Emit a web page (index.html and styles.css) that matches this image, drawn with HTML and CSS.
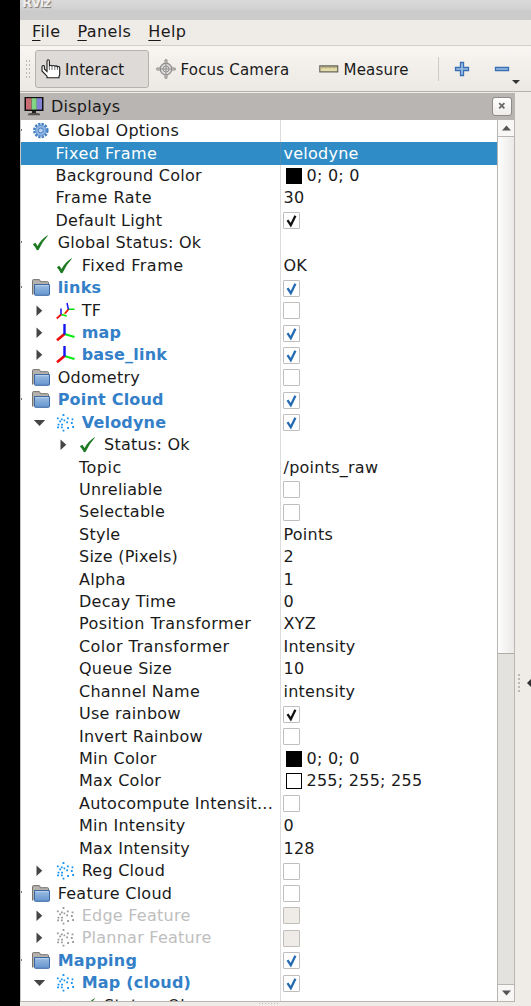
FILE: index.html
```html
<!DOCTYPE html>
<html lang="en">
<head>
<meta charset="utf-8">
<title>RViz</title>
<link rel="stylesheet" href="styles.css">
<script src="tree.js" defer></script>
</head>
<body>
<svg width="0" height="0" class="defs">
  <defs>
    <linearGradient id="gFolder" x1="0" y1="0" x2="0" y2="1"><stop offset="0" stop-color="#9dbde3"/><stop offset="1" stop-color="#6595ce"/></linearGradient>
    <symbol id="folder" viewBox="0 0 20 20">
      <path d="M1.500 16.500V2.500q0-.9 1-.9h5.500q.8 0 1 .9l.4 1.200h7.200q.9 0 .9.9V12" fill="#b5b1ad" stroke="#77736f"/>
      <path d="M3.500 6.500h15v9.900q0 .9-.9.9H4.400q-.9 0-.9-.9z" fill="url(#gFolder)" stroke="#3b67a3"/>
      <path d="M4.600 7.600h12.800" stroke="#b9d0ec" fill="none"/>
    </symbol>
    <symbol id="gear" viewBox="0 0 20 20">
      <circle cx="9.800" cy="9.500" r="6.500" fill="none" stroke="#4780c2" stroke-width="2.600" stroke-dasharray="2.300 1.100"/>
      <circle cx="9.800" cy="9.500" r="5.300" fill="#8db4e2" stroke="#5a8fce"/>
      <circle cx="9.800" cy="9.500" r="2.500" fill="#b9d2f0" stroke="#4780c2"/>
    </symbol>
    <symbol id="check" viewBox="0 0 20 20">
      <path d="M1.800 11.300l2.500-1.500 2.300 3.200Q10 6.200 16.600 2.200l.4.400Q11.500 8.500 7.500 17l-1.600.200Q4.200 13.800 1.800 11.300z" fill="#1d7a22"/>
    </symbol>
    <symbol id="axes" viewBox="0 0 20 20">
      <path d="M9.500 11l10 3" stroke="#06ee10" stroke-width="2.200"/>
      <path d="M9.500 11l-7.500 6.300" stroke="#ee0a0a" stroke-width="2.600"/>
      <path d="M9.500 1V11.500" stroke="#1414f0" stroke-width="2.400"/>
    </symbol>
    <symbol id="tf" viewBox="0 0 20 20">
      <path d="M13.500 8.300L8.500 13.500" stroke="#f4d422" stroke-width="1.500"/>
      <path d="M13 8.300h6.500M6.200 13.500l5.500 1.500" stroke="#06e010" stroke-width="1.500"/>
      <path d="M13.500 8.300L10 12.500M6.200 13.500l-4.500 4" stroke="#ee1111" stroke-width="1.700"/>
      <path d="M12 2l1.400 6.300M6 7.500v6" stroke="#1414f0" stroke-width="1.500"/>
    </symbol>
    <symbol id="cloud" viewBox="0 0 20 20">
      <path fill="none" stroke="currentColor" stroke-width="1.800" d="M7.600 2h1.800M1.900 5.400h1.800M5.900 6.400h1.800M11.900 5.400h1.800M16.600 6.400h1.800M4.200 8.400h1.800M8.600 7.400h1.600M11.200 9.400H13M15.900 10h1.800M2.600 11.700h1.800M6.200 11.700H8M2.200 14.400H4M5.900 14.400h1.800M12.200 15H14M17.200 14h1.800M7.600 17.700h1.800"/>
    </symbol>
    <symbol id="right" viewBox="0 0 14 14"><path d="M4.500 1.500v10.500L10.300 6.800z" fill="#454545"/></symbol>
    <symbol id="down" viewBox="0 0 14 14"><path d="M1.800 4h11.400L7.500 10z" fill="#454545"/></symbol>
    <symbol id="tick" viewBox="0 0 17 17"><path d="M4.500 8.200l3.300 5 4.600-9.500" fill="none" stroke="currentColor" stroke-width="2.300"/></symbol>
  </defs>
</svg>

<div class="window">
  <div class="titlebar"><span>RViz</span></div>
  <nav class="menubar"><span><u>F</u>ile</span><span><u>P</u>anels</span><span><u>H</u>elp</span></nav>
  <div class="toolbar">
    <i class="grip"></i>
    <div class="tool active">
      <svg width="20" height="20" viewBox="0 0 20 20"><path d="M6 10.500V2.200Q6 .8 7.200.8t1.200 1.400V7.500q0-1.200 1.300-1.200T11 7.500q0-1 1.400-1t1.400 1.200q.1-.8 1.300-.8t1.300 1q.2-.4 1.300-.3t1 1.300V15.500q0 1-.7 1.700v1.500H6v-1.500L1 12V7.500q0-1 1.200-1t1.200 1V10L6 12.500z" fill="#fff" stroke="#1b1b1b" stroke-width="1.100"/><path d="M8.400 7.500V11M11 7.500V11M13.800 7.500V11M16.400 8V11" stroke="#555" stroke-width=".8"/></svg>
      <span>Interact</span>
    </div>
    <div class="tool focus">
      <svg width="20" height="20" viewBox="0 0 20 20" fill="none"><circle cx="10" cy="10" r="5.800" fill="#dedcda" stroke="#8d8b89" stroke-width="1.300"/><circle cx="10" cy="10" r="3" stroke="#939190"/><path d="M10 4.500v11M4.500 10h11" stroke="#939190"/><path d="M9 4V.8h2V4M9 16v3.200h2V16M4 9H.8v2H4M16 9h3.200v2H16" fill="#d5d3d1" stroke="#8d8b89"/></svg>
      <span>Focus Camera</span>
    </div>
    <div class="tool measure">
      <svg width="20" height="20" viewBox="0 0 20 20"><path d="M.8 6.800h17.900v6H.8z" fill="#e6dda6" stroke="#66665f" stroke-width="1.200"/><path d="M3 7v2.500M5 7v2M7 7v2.500M9 7v2M11 7v2.500M13 7v2M15 7v2.500M17 7v2" stroke="#777260" stroke-width=".8"/></svg>
      <span>Measure</span>
    </div>
    <i class="sep"></i>
    <svg class="plus" width="16" height="16" viewBox="0 0 16 16"><path d="M6.500 1.500h3v5h5v3h-5v5h-3v-5h-5v-3h5z" fill="#9cc0e8" stroke="#3a70b2" stroke-width="1.300"/></svg>
    <svg class="minus" width="16" height="16" viewBox="0 0 16 16"><path d="M1.500 6.500h13v3h-13z" fill="#9cc0e8" stroke="#3a70b2" stroke-width="1.300"/></svg>
    <svg class="more" width="8" height="4" viewBox="0 0 8 4"><path d="M0 0h8L4 4z" fill="#333"/></svg>
  </div>

  <div class="workspace">
    <section class="dock">
      <header class="dock-title">
        <svg width="20" height="20" viewBox="0 0 20 20"><rect x=".5" y="1" width="19" height="14" fill="#111"/><path d="M2 2.200h5.600v11.400H2z" fill="#c96d72"/><path d="M7.600 2.200h5.200v11.400H7.600z" fill="#83d585"/><path d="M12.800 2.200H18v11.400h-5.200z" fill="#8381d3"/><path d="M8 15h4v2.500H8z" fill="#222"/><path d="M4 18.500q0-1.500 3-1.500h6q3 0 3 1.500v.8H4z" fill="#55534f"/></svg>
        <span>Displays</span>
        <b class="close"><svg width="8" height="8" viewBox="0 0 8 8"><path d="M1.200 1.200l5.200 5.200M6.400 1.200L1.200 6.400" stroke="#666" stroke-width="1.700"/></svg></b>
      </header>
      <div class="view">
        <div class="tree" id="tree"></div>
        <div class="scroll">
          <div class="btn up"><svg width="9" height="6" viewBox="0 0 9 6"><path d="M0 5.500L4.500.5 9 5.500z" fill="#555"/></svg></div>
          <div class="thumb"></div>
          <div class="trough"></div>
          <div class="btn dn"><svg width="9" height="6" viewBox="0 0 9 6"><path d="M0 .5h9L4.500 5.500z" fill="#555"/></svg></div>
        </div>
      </div>
      <footer class="resize"><i></i></footer>
    </section>
    <aside class="splitter"><i></i><svg width="4" height="8" viewBox="0 0 4 8"><path d="M4 0v8L0 4z" fill="#333"/></svg></aside>
  </div>
</div>
</body>
</html>
```
FILE: tree.js
```javascript
// Each row: level, icon, expander arrow, name, value kind, value text, extra classes
const rows = [
  [0, "gear", "", "Global Options", "", "", "dot"],
  [1, "", "", "Fixed Frame", "text", "velodyne", "selected wide"],
  [1, "", "", "Background Color", "black", "0; 0; 0", ""],
  [1, "", "", "Frame Rate", "text", "30", "wide"],
  [1, "", "", "Default Light", "on", "", ""],
  [0, "check", "", "Global Status: Ok", "", "", "dot"],
  [1, "check", "", "Fixed Frame", "text", "OK", "wide"],
  [0, "folder", "", "links", "on", "", "dot enabled"],
  [1, "tf", "right", "TF", "off", "", ""],
  [1, "axes", "right", "map", "on", "", "enabled"],
  [1, "axes", "right", "base_link", "on", "", "enabled"],
  [0, "folder", "", "Odometry", "off", "", ""],
  [0, "folder", "", "Point Cloud", "on", "", "dot enabled"],
  [1, "cloud", "down", "Velodyne", "on", "", "enabled"],
  [2, "check", "right", "Status: Ok", "", "", ""],
  [2, "", "", "Topic", "text", "/points_raw", "wide"],
  [2, "", "", "Unreliable", "off", "", ""],
  [2, "", "", "Selectable", "off", "", ""],
  [2, "", "", "Style", "text", "Points", ""],
  [2, "", "", "Size (Pixels)", "text", "2", ""],
  [2, "", "", "Alpha", "text", "1", ""],
  [2, "", "", "Decay Time", "text", "0", ""],
  [2, "", "", "Position Transformer", "text", "XYZ", "semi"],
  [2, "", "", "Color Transformer", "text", "Intensity", "semi"],
  [2, "", "", "Queue Size", "text", "10", ""],
  [2, "", "", "Channel Name", "text", "intensity", ""],
  [2, "", "", "Use rainbow", "on", "", ""],
  [2, "", "", "Invert Rainbow", "off", "", ""],
  [2, "", "", "Min Color", "black", "0; 0; 0", ""],
  [2, "", "", "Max Color", "white", "255; 255; 255", ""],
  [2, "", "", "Autocompute Intensit...", "off", "", ""],
  [2, "", "", "Min Intensity", "text", "0", ""],
  [2, "", "", "Max Intensity", "text", "128", ""],
  [1, "cloud", "right", "Reg Cloud", "off", "", ""],
  [0, "folder", "", "Feature Cloud", "off", "", "dot"],
  [1, "cloud", "right", "Edge Feature", "off", "", "disabled"],
  [1, "cloud", "right", "Plannar Feature", "off", "", "disabled"],
  [0, "folder", "", "Mapping", "on", "", "dot enabled"],
  [1, "cloud", "down", "Map (cloud)", "on", "", "enabled"],
  [2, "check", "right", "Status: Ok", "", "", ""],
];

const use = (id, size, cls) =>
  `<svg class="${cls}" width="${size}" height="${size}"><use href="#${id}"/></svg>`;

function valueCell(kind, text) {
  if (kind === "on") return `<span class="box">${use("tick", 17, "tick")}</span>`;
  if (kind === "off") return `<span class="box"></span>`;
  if (kind === "black" || kind === "white") return `<i class="swatch ${kind}"></i><span>${text}</span>`;
  return `<span>${text}</span>`;
}

document.getElementById("tree").innerHTML = rows
  .map(([level, icon, arrow, name, kind, value, cls]) => {
    const lead = icon && level > 0
      ? (arrow ? use(arrow, 14, "arrow") : `<i class="arrow"></i>`)
      : "";
    const pic = icon ? use(icon, 20, "icon " + icon) : "";
    return `<div class="row ${cls}"><div class="name l${level} ${icon ? "" : "plain"}">${lead}${pic}<span>${name}</span></div><div class="value">${valueCell(kind, value)}</div></div>`;
  })
  .join("");
```
FILE: styles.css
```css
* { box-sizing: border-box; }
body {
  margin: 0;
  height: 1006px;
  overflow: hidden;
  background: #000;
  color: #1a1a1a;
  font: 16px "DejaVu Sans", sans-serif;
  letter-spacing: 0.25px;
}
.defs { position: absolute; }
svg { display: block; flex: none; }
.window {
  margin-left: 20px;
  height: 1006px;
  display: flex;
  flex-direction: column;
  background: #efebe7;
}
.titlebar {
  height: 20px;
  flex: none;
  overflow: hidden;
  background: linear-gradient(#dadada, #d2d2d2 45%, #cbcbcb 55%, #cccccc);
}
.titlebar span {
  display: block;
  margin: -6px 0 0 2px;
  font-size: 13px;
  line-height: 18px;
  font-weight: bold;
  letter-spacing: -1px;
  color: #eee;
  text-shadow: 1px 1px 1px #777;
}
.menubar {
  height: 26px;
  flex: none;
  display: flex;
  gap: 17px;
  padding: 0 0 2px 12px;
  align-items: center;
  letter-spacing: 0.4px;
  border-bottom: 1px solid #d3cfcb;
}
.menubar u { text-decoration-thickness: 1px; text-underline-offset: 3px; }
.toolbar {
  height: 46px;
  flex: none;
  display: flex;
  align-items: center;
  position: relative;
  padding-left: 5px;
  background: linear-gradient(#f8f5f2, #ece8e3);
  border-bottom: 1px solid #b5b0ab;
}
.grip {
  width: 6px;
  height: 20px;
  background: radial-gradient(circle, #bdb8b3 0.8px, transparent 1px) 0 0 / 3px 4px;
}
.tool {
  display: flex;
  align-items: center;
  gap: 4.5px;
  height: 38px;
  font-size: 15px;
  letter-spacing: 0.2px;
}
.tool span { margin-top: 2px; }
.tool.active {
  width: 114px;
  margin-left: 4px;
  padding-left: 5px;
  gap: 4px;
  letter-spacing: 0.1px;
  background: #dedad7;
  border: 1px solid #b6b1ad;
  border-radius: 3px;
}
.focus { margin-left: 7px; width: 163px; }
.measure { width: 119px; }
.sep { width: 1px; height: 24px; background: #cdc9c5; }
.plus { margin-left: 15px; }
.minus { margin-left: 24px; }
.more { position: absolute; left: 492px; top: 34px; }
.workspace { flex: 1; min-height: 0; display: flex; padding-top: 1px; }
.dock { width: 495px; display: flex; flex-direction: column; }
.dock-title {
  height: 27px;
  flex: none;
  display: flex;
  align-items: center;
  gap: 6px;
  padding: 0 3px 1px 4px;
  background: #b9b5b2;
}
.dock-title span { padding-left: 1px; }
.close {
  width: 20px;
  height: 19px;
  margin-left: auto;
  display: grid;
  place-items: center;
  border: 1px solid #8f8b88;
  border-radius: 3px;
  background: linear-gradient(#fff, #eeecea);
}
.view {
  flex: 1;
  min-height: 0;
  display: flex;
  border-left: 1px solid #c9c5c1;
  border-right: 1px solid #b9b5b1;
  border-bottom: 1px solid #b9b5b1;
  background: #fff;
}
.tree { flex: 1; overflow: hidden; }
.row { height: 22.43px; display: flex; position: relative; }
.name {
  width: 260px;
  flex: none;
  display: flex;
  align-items: center;
  border-right: 1px solid #dcdcdc;
  white-space: nowrap;
}
.name span { margin-top: -1px; }
.name.l0 { padding-left: 10px; }
.name.l1 { padding-left: 11px; }
.name.l2 { padding-left: 35px; }
.name.l1.plain { padding-left: 34.5px; }
.name.l2.plain { padding-left: 58px; }
.arrow { width: 14px; margin-right: 9px; }
.icon { margin-right: 6.7px; }
.l2 .icon { margin: 0 6px 0 -1px; }
.cloud { color: #1593f5; }
.value {
  flex: 1;
  display: flex;
  align-items: center;
  padding-left: 2px;
}
.value > span:not(.box) { margin: -1px 0 0 0.5px; }
.box {
  width: 17px;
  height: 17px;
  border: 1px solid #c1bebb;
  border-radius: 1px;
  background: #fff;
  color: #111;
}
.tick { margin: -1px; }
.swatch { width: 16px; height: 16px; margin: 0 4px 0 3px; border: 1px solid #000; }
.black { background: #000; }
.white { background: #fff; }
.dot::before {
  content: "";
  position: absolute;
  top: 9px;
  left: 0;
  width: 1px;
  height: 2px;
  background: #777;
}
.wide .name { letter-spacing: 0.5px; }
.semi .name { letter-spacing: 0.45px; }
.selected { background: #308cc6; color: #fff; }
.selected .name { border-color: #4b8bb4; }
.enabled .name span { color: #3480c8; font-weight: bold; letter-spacing: 0.2px; }
.enabled .box { color: #246ab0; }
.disabled .name { color: #bebebe; }
.disabled .cloud { color: #999; }
.disabled .box { background: #efebe7; }
.scroll {
  width: 17px;
  display: flex;
  flex-direction: column;
  border-left: 1px solid #b9b5b1;
  background: #e4e2df;
}
.btn { height: 17px; display: grid; place-items: center; background: #f8f7f6; }
.up { border-bottom: 1px solid #b9b5b1; }
.dn { border-top: 1px solid #b9b5b1; }
.thumb {
  height: 517px;
  background: linear-gradient(90deg, #fdfdfd, #ebeae8);
  border-bottom: 1px solid #b0aca8;
}
.trough { flex: 1; }
.resize { height: 4px; flex: none; display: flex; justify-content: center; }
.resize i {
  width: 20px;
  height: 3px;
  background: radial-gradient(circle, #bdb8b3 0.8px, transparent 1px) 0 0 / 3px 3px;
}
.splitter { flex: 1; display: flex; align-items: center; justify-content: space-between; padding: 266px 0 0 2px; }
.splitter i {
  width: 4px;
  height: 20px;
  background: radial-gradient(circle, #bdb8b3 0.8px, transparent 1px) 0 0 / 4px 4px;
}
```
